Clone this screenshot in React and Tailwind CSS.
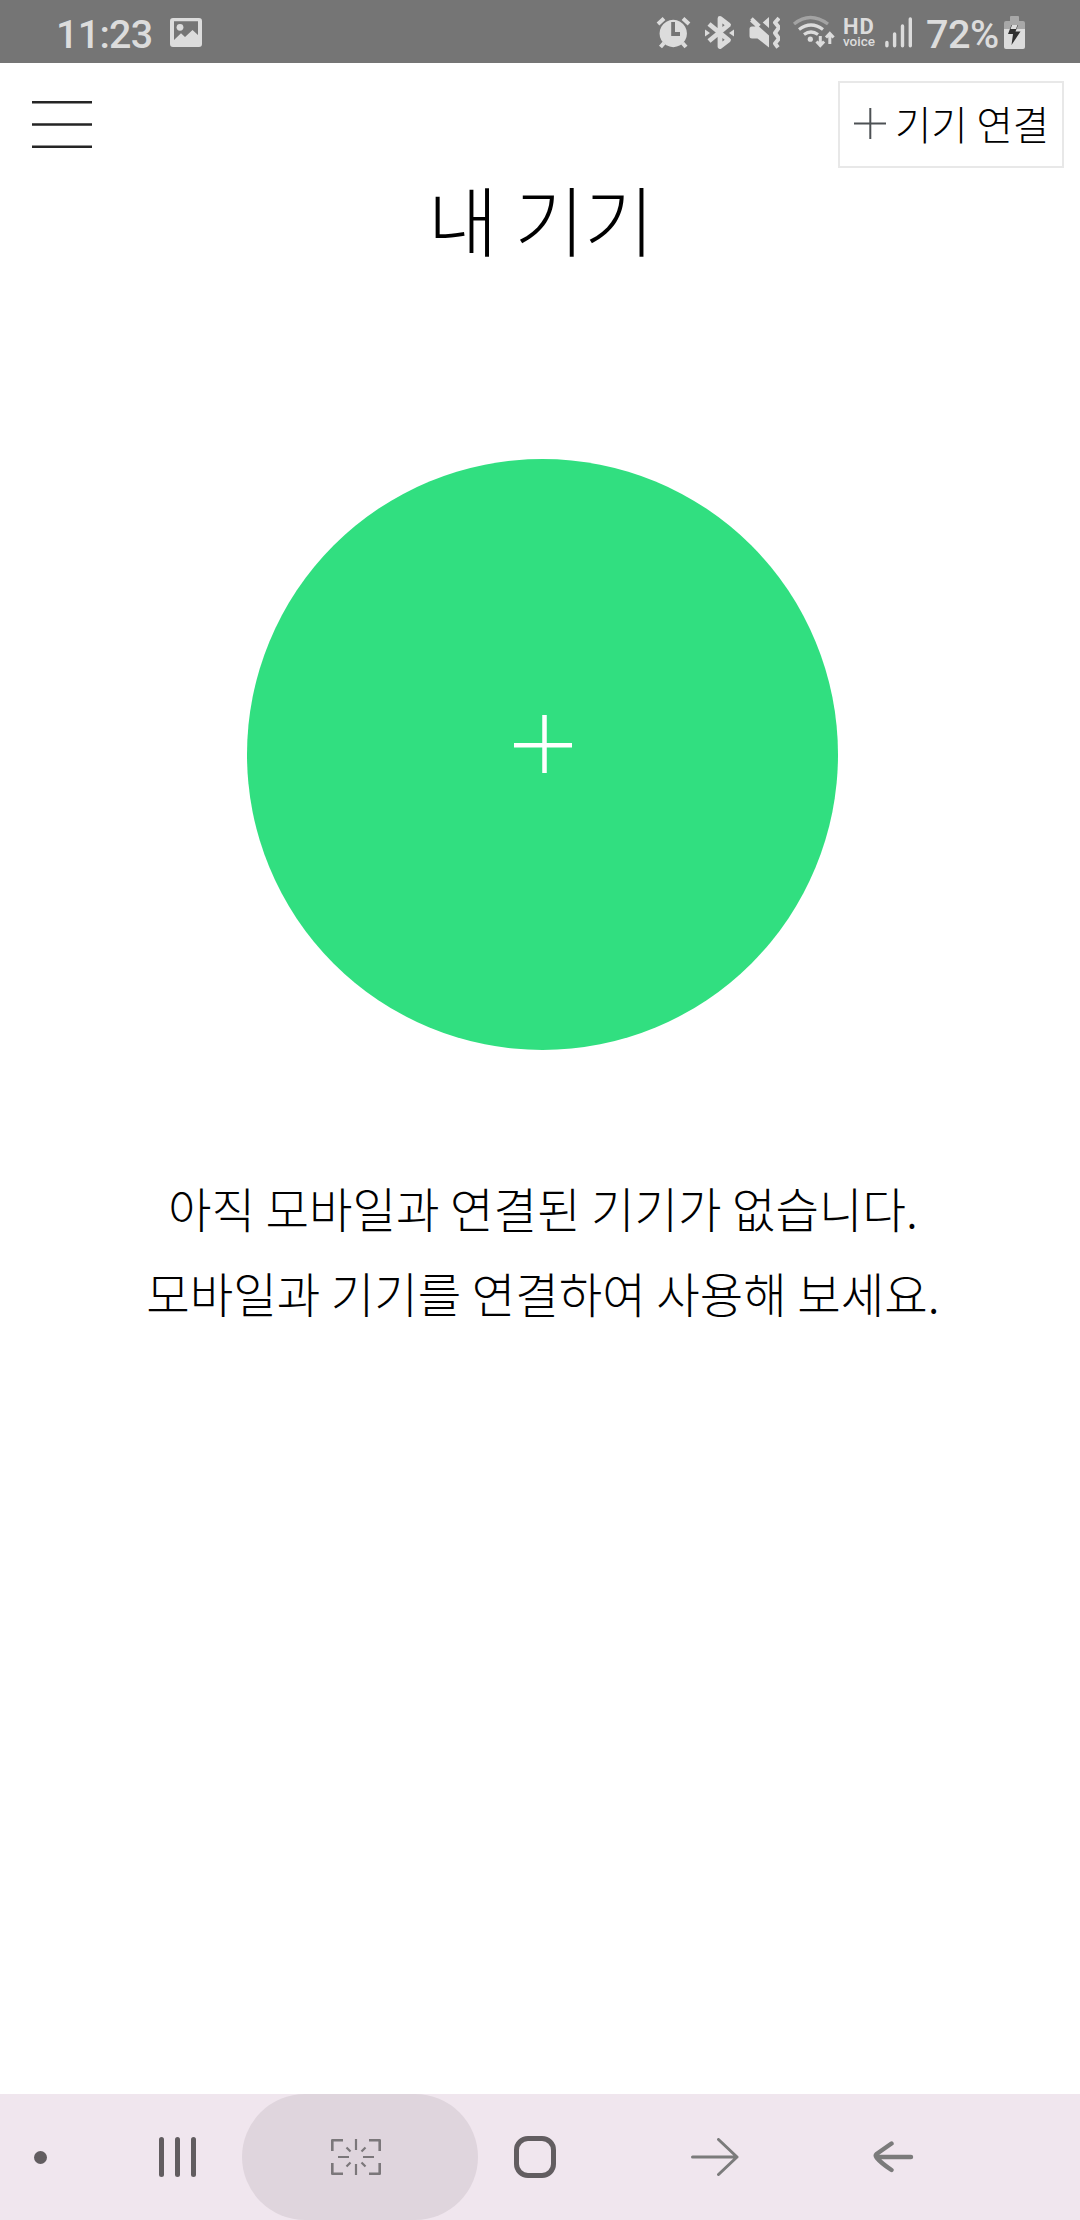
import React from "react";

const KR = "font-['Noto_Sans_CJK_KR',sans-serif]";

function StatusBar() {
  return (
    <div className="flex h-[63px] shrink-0 bg-[#757575] text-[#dcdcdc] font-[Roboto,sans-serif]">
      <span className="ml-[56px] mt-[15px] w-[98px] text-[39.400px] leading-[40px] font-medium whitespace-nowrap tracking-[-0.700px]">11:23</span>
      <svg className="ml-[16px] mt-[18px]" width="32" height="29" viewBox="0 0 32 29" fill="currentColor">
        <path fillRule="evenodd" d="M3 0H29Q32 0 32 3V26Q32 29 29 29H3Q0 29 0 26V3Q0 0 3 0ZM4 3.2V22L11 15.3L15 19L22.5 12L28 17V3.2Z" />
        <circle cx="10" cy="9.300" r="3.400" />
      </svg>
      <svg className="ml-[454px]" width="124" height="63" viewBox="656 0 124 63" fill="currentColor">
        <path fillRule="evenodd" d="M673.2 19.800a13.700 13.700 0 1 0 .1 0ZM671.200 22H675V32H680V36H671.200Z" />
        <path d="M658 24l6-5.500M689 24l-6-5.500M664 43l-3.500 4M682.500 43l3.500 4" stroke="currentColor" strokeWidth="4" fill="none" />
        <path d="M709 24L728.500 40L720 46.500V18.500L728.500 25L709 41" fill="none" stroke="currentColor" strokeWidth="4.800" strokeLinejoin="round" />
        <path d="M705 29.500l5 3.500-5 3.500zM734 29.500l-5 3.500 5 3.500z" />
        <path d="M751.500 20L769 35.500V47.500L757.500 38.500H752Q749.500 38.500 749.500 36V29Q749.500 26.500 752 26.500H755.500L750 21.500ZM769 17V28L762.700 22.500Z" />
        <path d="M751.500 18.500l8 7.500" stroke="currentColor" strokeWidth="3.500" />
        <path d="M779 18l-4 4.500 4 5-4 5.500 4 5.500-4 5 3 4" stroke="currentColor" strokeWidth="4" fill="none" strokeLinejoin="round" />
      </svg>
      <svg className="ml-[12px]" width="44" height="63" viewBox="792 0 44 63" fill="none" stroke="currentColor">
        <path d="M794 24q16-13 34 0" strokeWidth="3.300" opacity=".45" />
        <path d="M799 29.500q12-9 24 0M804 34.500q7-5 14 0" strokeWidth="3.300" />
        <circle cx="810.300" cy="39.200" r="2.600" fill="currentColor" stroke="none" />
        <path d="M820.300 36v9M816.500 41.500l3.800 4 3.800-4M829.800 44V34M826 37.500l3.800-4 3.800 4" strokeWidth="3" />
      </svg>
      <div className="ml-[6px] mt-[19px] w-[37px] pl-px">
        <div className="text-[22px] leading-[16px] font-bold tracking-[1px] whitespace-nowrap">HD</div>
        <div className="text-[13.500px] leading-[12px] font-medium whitespace-nowrap">voice</div>
      </div>
      <svg className="ml-[6px]" width="28" height="63" viewBox="885 0 28 63" stroke="currentColor" strokeWidth="3.400" strokeLinecap="round">
        <path d="M886.900 42.500v3.200M894.600 34v11.700M902.500 26v19.700M910.300 19v26.700" />
      </svg>
      <span className="ml-[13px] mt-[15px] w-[73px] text-[39.700px] leading-[40px] font-medium whitespace-nowrap tracking-[-0.5px]">72%</span>
      <svg className="ml-[5px]" width="22" height="63" viewBox="1004 0 22 63" fill="currentColor">
        <path opacity=".5" d="M1010 17q0-1 1-1h7q1 0 1 1v4h4q2 0 2 2v6h-21v-6q0-2 2-2h4z" />
        <path d="M1004 29h21v18q0 2-2 2h-17q-2 0-2-2z" />
        <path d="M1011.500 25l-3.500 9h5l-1.500 11 9-13.500h-5l2.500-6.500z" fill="#303030" />
        <path d="M1012 25h5.500l-1.500 4h-5.500z" />
      </svg>
    </div>
  );
}

function Header() {
  return (
    <header className="flex shrink-0 items-start justify-between pt-[18px] pr-4 pl-8">
      <svg className="mt-[20px]" width="60" height="48" viewBox="0 0 60 48" fill="#252525">
        <rect y="0" width="60" height="2.500" />
        <rect y="22.250" width="60" height="2.500" />
        <rect y="44.500" width="60" height="2.500" />
      </svg>
      <button className="flex h-[87px] w-[226px] items-center border-2 border-[#e8e8e8] pl-[14px]">
        <svg className="mb-[1px]" width="32" height="32" viewBox="0 0 32 32" stroke="#4d5154" strokeWidth="2">
          <path d="M0 15.500H32M16.300 0V31" />
        </svg>
        <span className={`${KR} mb-[3px] ml-[9px] text-[39.500px] leading-[48px] font-light whitespace-nowrap text-black`}>기기 연결</span>
      </button>
    </header>
  );
}

function Main() {
  return (
    <main className="flex grow flex-col items-center">
      <h1 className={`${KR} ml-[2px] text-[76px] leading-[100px] font-light whitespace-nowrap text-black`}>내 기기</h1>
      <button className="mt-[191px] ml-[5px] flex h-[591px] w-[591px] items-center justify-center rounded-full bg-[#31df80]">
        <svg className="mb-[22px]" width="58" height="58" viewBox="0 0 58 58" stroke="white" strokeWidth="4.500">
          <path d="M0 30.300H58M30.500 0V58" />
        </svg>
      </button>
      <p className={`${KR} mt-[115px] ml-[6px] text-center text-[47.300px] leading-[85px] font-light whitespace-nowrap text-black`}>
        아직 모바일과 연결된 기기가 없습니다.
        <br />
        모바일과 기기를 연결하여 사용해 보세요.
      </p>
    </main>
  );
}

function NavBar() {
  return (
    <nav className="flex h-[126px] shrink-0 items-center bg-[#f0e6ee]">
      <span className="ml-[33.500px] h-[13px] w-[13px] rounded-full bg-[#625d60]" />
      <div className="ml-[112px] flex gap-[11px]">
        <span className="h-[40px] w-[5px] rounded-full bg-[#625d60]" />
        <span className="h-[40px] w-[5px] rounded-full bg-[#625d60]" />
        <span className="h-[40px] w-[5px] rounded-full bg-[#625d60]" />
      </div>
      <div className="ml-[46.500px] flex h-[126px] w-[236px] items-center justify-center rounded-full bg-[#dfd5dd]">
        <svg className="ml-[-8px]" width="50" height="36" viewBox="0 0 50 36" fill="none" stroke="#7b777a">
          <path strokeWidth="2.600" strokeLinejoin="round" d="M1.300 12V1.300H12M38 1.300H48.700V12M48.700 24V34.700H38M12 34.700H1.300V24" />
          <path strokeWidth="2.200" d="M25 0V11M25 25V36M7 18H18M32 18H43M15.500 8.500l4 4M34.500 8.500l-4 4M15.500 27.500l4-4M34.500 27.500l-4-4" />
        </svg>
      </div>
      <span className="ml-[36px] h-[42px] w-[42px] rounded-[14px] border-[5px] border-[#625d60]" />
      <svg className="ml-[135px]" width="48" height="38" viewBox="0 0 48 38" fill="none" stroke="#7b7b7b" strokeWidth="3" strokeLinecap="round" strokeLinejoin="round">
        <path d="M1.500 19H46M27.500 1.500L46 19L27.500 36.500" />
      </svg>
      <svg className="ml-[134px]" width="41" height="32" viewBox="0 0 41 32" fill="none" stroke="#7b7b7b" strokeWidth="4.400" strokeLinecap="round" strokeLinejoin="round">
        <path d="M4 16H38M18.500 2.500L3.500 13Q2 14.500 3.500 16.500Q8 22 18.500 29" />
      </svg>
    </nav>
  );
}

export default function App() {
  return (
    <div className="flex h-[2220px] w-[1080px] flex-col overflow-hidden bg-white">
      <StatusBar />
      <Header />
      <Main />
      <NavBar />
    </div>
  );
}
